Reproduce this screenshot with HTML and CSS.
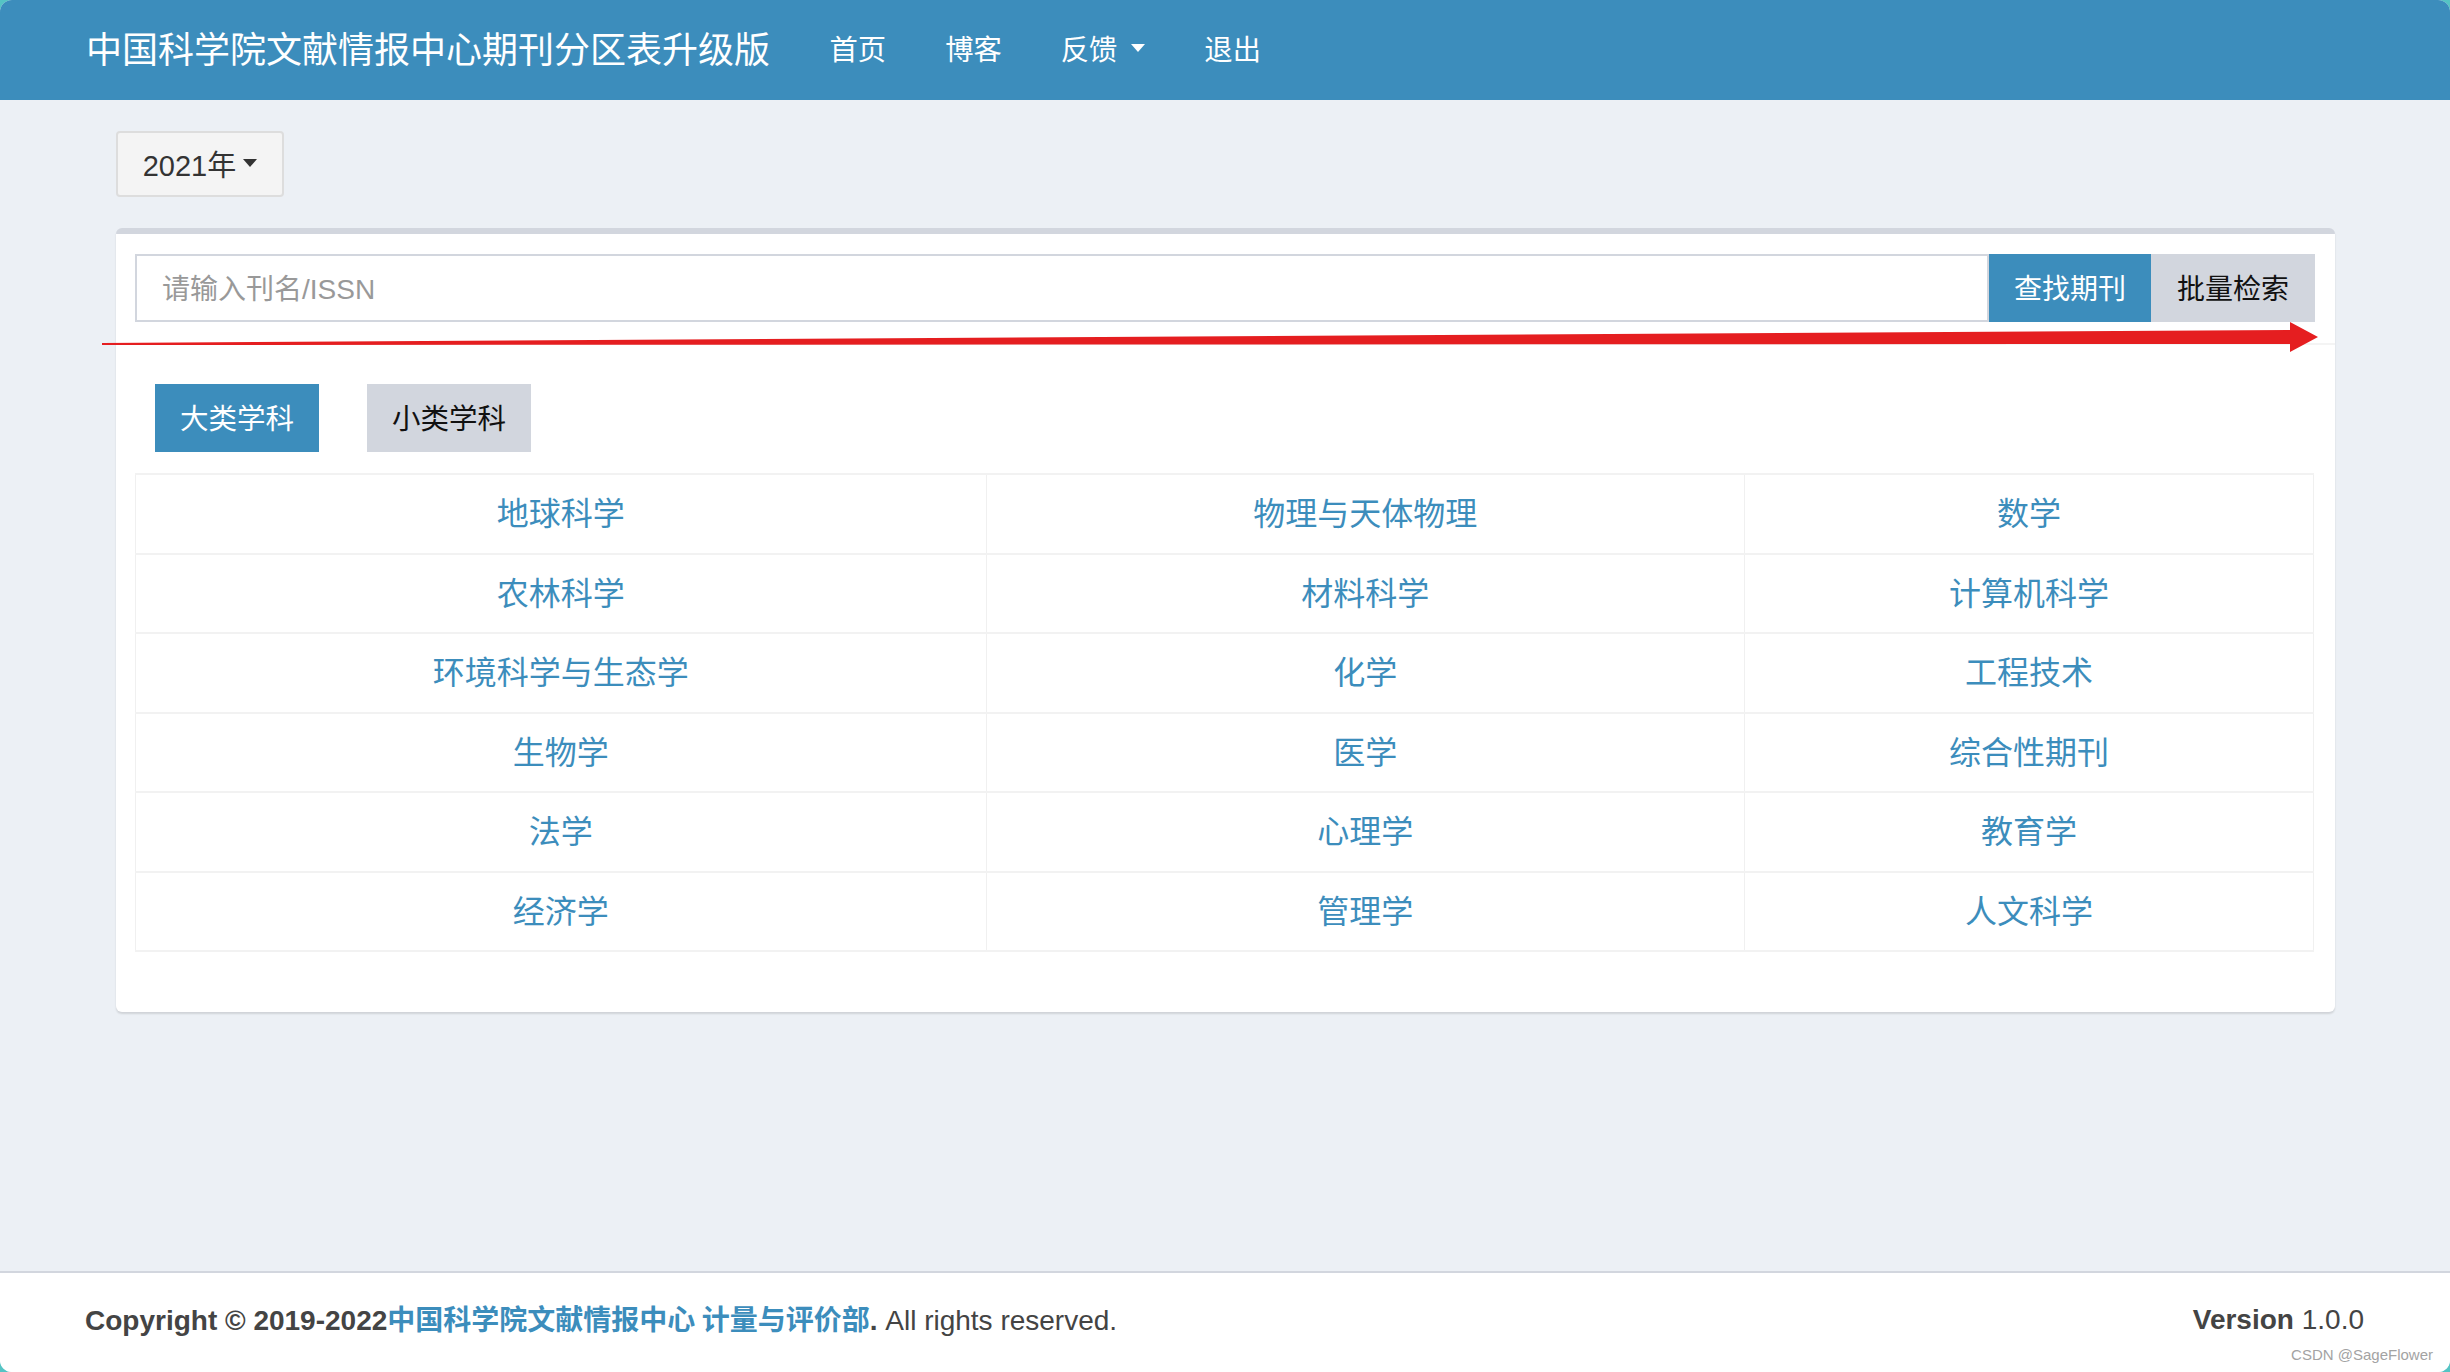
FILE: index.html
```html
<!DOCTYPE html>
<html lang="zh-CN">
<head>
<meta charset="utf-8">
<title>中国科学院文献情报中心期刊分区表升级版</title>
<link rel="stylesheet" href="styles.css">
</head>
<body>
<div class="page">
  <header class="navbar">
    <span class="brand">中国科学院文献情报中心期刊分区表升级版</span>
    <nav class="nav">
      <a class="nav-item">首页</a>
      <a class="nav-item">博客</a>
      <a class="nav-item">反馈<span class="caret caret-white"></span></a>
      <a class="nav-item">退出</a>
    </nav>
  </header>

  <main class="content">
    <div class="year-row">
      <button class="year-btn">2021年<span class="caret caret-dark"></span></button>
    </div>

    <section class="box">
      <div class="box-header">
        <div class="search-group">
          <div class="search-input">请输入刊名/ISSN</div>
          <button class="btn btn-primary">查找期刊</button>
          <button class="btn btn-gray">批量检索</button>
        </div>
      </div>
      <div class="box-body">
        <div class="tabs">
          <button class="tab tab-active">大类学科</button>
          <button class="tab">小类学科</button>
        </div>
        <table class="subjects">
          <colgroup>
            <col class="c1"><col class="c2"><col class="c3">
          </colgroup>
          <tbody>
            <tr><td><a>地球科学</a></td><td><a>物理与天体物理</a></td><td><a>数学</a></td></tr>
            <tr><td><a>农林科学</a></td><td><a>材料科学</a></td><td><a>计算机科学</a></td></tr>
            <tr><td><a>环境科学与生态学</a></td><td><a>化学</a></td><td><a>工程技术</a></td></tr>
            <tr><td><a>生物学</a></td><td><a>医学</a></td><td><a>综合性期刊</a></td></tr>
            <tr><td><a>法学</a></td><td><a>心理学</a></td><td><a>教育学</a></td></tr>
            <tr><td><a>经济学</a></td><td><a>管理学</a></td><td><a>人文科学</a></td></tr>
          </tbody>
        </table>
      </div>
    </section>
  </main>

  <footer class="footer">
    <div class="copyright"><b>Copyright © 2019-2022<a class="org">中国科学院文献情报中心 计量与评价部</a>.</b> All rights reserved.</div>
    <div class="version"><b>Version</b> 1.0.0</div>
  </footer>

  <svg class="annot-arrow" viewBox="0 0 2222 36" width="2222" height="36">
    <polygon points="2,25 2190,12 2190,4 2218,19 2190,34 2190,26 2,27" fill="#e51e20"/>
  </svg>
  <div class="watermark">CSDN @SageFlower</div>
</div>
</body>
</html>
```

FILE: styles.css
```css
html, body {
  margin: 0;
  padding: 0;
}
body {
  background: #55c4c4;
  font-family: "Liberation Sans", "Noto Sans CJK SC", sans-serif;
  color: #333;
}
.page {
  position: relative;
  width: 2450px;
  height: 1372px;
  background: #ecf0f5;
  border-radius: 12px;
  overflow: hidden;
  display: flex;
  flex-direction: column;
}

/* navbar */
.navbar {
  height: 100px;
  background: #3c8dbc;
  display: flex;
  align-items: center;
  padding-left: 86px;
  color: #fff;
  flex: none;
}
.brand {
  font-family: "Noto Sans CJK SC", sans-serif;
  font-size: 36px;
  line-height: 1;
  margin-right: 30px;
  position: relative;
  top: -3px;
}
.nav {
  display: flex;
  align-items: center;
  position: relative;
  top: -2px;
}
.nav-item {
  font-family: "Noto Sans CJK SC", sans-serif;
  font-size: 28.3px;
  line-height: 1;
  padding: 0 29.5px;
  display: flex;
  align-items: center;
  color: #fff;
}
.caret {
  display: inline-block;
  width: 0;
  height: 0;
  border-left: 7px solid transparent;
  border-right: 7px solid transparent;
  border-top: 8px solid #fff;
  margin-left: 14px;
}
.caret-dark {
  border-top-color: #333;
  margin-left: 7px;
}

/* content */
.content {
  flex: 1;
  padding: 31px 115px 0 116px;
}
.year-row {
  display: flex;
}
.year-btn {
  height: 66px;
  width: 168px;
  background: #f4f4f4;
  border: 2px solid #dddddd;
  border-radius: 4px;
  font-family: "Liberation Sans", "Noto Sans CJK SC", sans-serif;
  font-size: 29px;
  color: #333;
  display: flex;
  align-items: center;
  justify-content: center;
  padding: 0 0 2px 0;
}

.box {
  margin-top: 31px;
  background: #fff;
  border-top: 6px solid #d2d6de;
  border-radius: 6px;
  box-shadow: 0 2px 2px rgba(0, 0, 0, 0.12);
  height: 784px;
  box-sizing: border-box;
}
.box-header {
  padding: 20px 20px 21px 19px;
  border-bottom: 2px solid #f4f4f4;
}
.search-group {
  display: flex;
  height: 68px;
}
.search-input {
  flex: 1;
  border: 2px solid #d2d6de;
  font-family: "Liberation Sans", "Noto Sans CJK SC", sans-serif;
  font-size: 28px;
  color: #999;
  display: flex;
  align-items: center;
  padding: 0 0 2px 25px;
}
.btn {
  border: 0;
  margin: 0;
  font-family: "Noto Sans CJK SC", sans-serif;
  font-size: 28px;
  padding: 0 0 3px 0;
  height: 68px;
}
.btn-primary {
  width: 162px;
  background: #3c8dbc;
  color: #fff;
}
.btn-gray {
  width: 164px;
  background: #d2d6de;
  color: #111;
}

.box-body {
  padding: 39px 21px 20px 19px;
}
.tabs {
  display: flex;
  gap: 48px;
  padding-left: 20px;
  margin-bottom: 21px;
}
.tab {
  width: 164px;
  height: 68px;
  border: 0;
  background: #d2d6de;
  color: #111;
  font-family: "Noto Sans CJK SC", sans-serif;
  font-size: 28.5px;
  padding: 0 0 3px 0;
}
.tab-active {
  background: #3c8dbc;
  color: #fff;
}

.subjects {
  width: 100%;
  table-layout: fixed;
  border-collapse: collapse;
}
.subjects .c1 { width: 39.05%; }
.subjects .c2 { width: 34.83%; }
.subjects .c3 { width: 26.12%; }
.subjects td {
  height: 72.5px;
  padding: 0 0 5px 0;
  text-align: center;
  vertical-align: middle;
  border-top: 2px solid #f2f2f2;
  border-bottom: 2px solid #f2f2f2;
  border-left: 1px solid #f0f0f0;
  border-right: 1px solid #f0f0f0;
  font-family: "Noto Sans CJK SC", sans-serif;
  font-size: 32px;
  line-height: 1;
}
.subjects a {
  color: #3c8dbc;
}

/* footer */
.footer {
  flex: none;
  height: 99px;
  background: #fff;
  border-top: 2px solid #d2d6de;
  display: flex;
  align-items: center;
  justify-content: space-between;
  padding: 0 86px 0 85px;
  font-size: 28px;
  color: #444;
}
.copyright, .version {
  line-height: 1;
  position: relative;
  top: -3px;
}
.copyright b {
  font-weight: bold;
}
.org {
  color: #3c8dbc;
  font-family: "Noto Sans CJK SC", sans-serif;
}
.version b {
  font-weight: bold;
}

/* overlays */
.annot-arrow {
  position: absolute;
  left: 100px;
  top: 318px;
}
.watermark {
  position: absolute;
  right: 17px;
  bottom: 9px;
  font-size: 15px;
  color: #a3a3a3;
  font-family: "Liberation Sans", sans-serif;
}
```
